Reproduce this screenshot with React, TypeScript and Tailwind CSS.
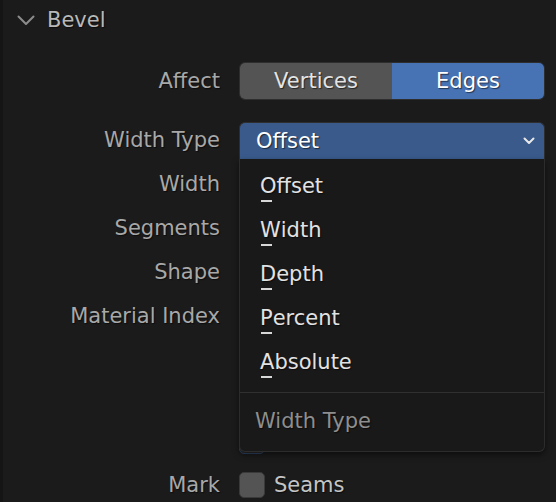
import React from "react";

const shadow = "[text-shadow:1px_1px_1px_rgba(0,0,0,0.55)]";

function Mnemonic({ text }: { text: string }) {
  return (
    <span className="text-[#e2e2e2] [text-shadow:1px_1px_1px_rgba(0,0,0,0.55)]">
      <span className="relative inline-block leading-none">
        {text[0]}
        <span className="absolute left-[1px] bottom-[-5px] w-[11px] h-[2px] bg-[#d8d8d8]" />
      </span>
      {text.slice(1)}
    </span>
  );
}

function Label({ children }: { children?: React.ReactNode }) {
  return (
    <div className="w-[217px] shrink-0 text-right text-[#a8a8a8] [text-shadow:1px_1px_1px_rgba(0,0,0,0.55)]">
      {children}
    </div>
  );
}

export default function App() {
  const items = ["Offset", "Width", "Depth", "Percent", "Absolute"];
  return (
    <div className="flex w-[556px] h-[502px] overflow-hidden bg-[#1b1b1b] font-['DejaVu_Sans',sans-serif] text-[21px] leading-none">
      <div className="w-[3px] shrink-0 bg-[#151515]" />
      <div className="flex-1 flex flex-col">
        {/* Header */}
        <div className="flex items-center h-[40px] pl-[14px] gap-[12px]">
          <svg width="18" height="11" viewBox="0 0 18 11" className="shrink-0">
            <path d="M1.5 1.5 L9 9 L16.5 1.5" fill="none" stroke="#8c8c8c" strokeWidth="2" strokeLinecap="round" strokeLinejoin="round" />
          </svg>
          <span className={`text-[#b8b8b8] ${shadow}`}>Bevel</span>
        </div>

        {/* Affect */}
        <div className="flex items-center gap-[19px] mt-[22px] h-[38px]">
          <Label>Affect</Label>
          <div className="flex w-[306px] h-[38px] rounded-[6px] overflow-hidden border border-[#2e2e2e]">
            <div className={`flex-1 flex items-center justify-center bg-[#545454] text-[#e4e4e4] ${shadow}`}>Vertices</div>
            <div className={`flex-1 flex items-center justify-center bg-[#4772b3] text-white ${shadow}`}>Edges</div>
          </div>
        </div>

        {/* Width Type */}
        <div className="flex items-center gap-[19px] mt-[22px] h-[37px]">
          <Label>Width Type</Label>
          <div className="relative w-[306px] h-[37px]">
            <div className={`flex items-center justify-between h-full pl-[16px] pr-[9px] bg-[#395a8b] rounded-t-[6px] border-t border-x border-[#2e2e2e] text-white ${shadow}`}>
              <span>Offset</span>
              <svg width="12" height="8" viewBox="0 0 12 8">
                <path d="M1.5 1.5 L6 6 L10.5 1.5" fill="none" stroke="#e8e8e8" strokeWidth="2" strokeLinecap="round" strokeLinejoin="round" />
              </svg>
            </div>
            {/* Dropdown menu */}
            <div className="absolute left-0 top-full z-10 w-[306px] h-[293px] flex flex-col bg-[#191919] border-x border-b border-[#2c2c2c] rounded-b-[6px] shadow-[0_3px_6px_rgba(0,0,0,0.5)]">
              <div className="pt-[5px]">
                {items.map((it) => (
                  <div key={it} className="h-[44px] flex items-center pl-[20px]">
                    <Mnemonic text={it} />
                  </div>
                ))}
              </div>
              <div className="mt-[8px] h-px bg-[#303030]" />
              <div className={`h-[56px] flex items-center pl-[15px] text-[#8e8e8e] ${shadow}`}>Width Type</div>
            </div>
          </div>
        </div>

        {/* Hidden rows behind the menu */}
        <div className="flex flex-col mt-[3px]">
          {["Width", "Segments", "Shape", "Material Index"].map((l) => (
            <div key={l} className="flex items-center gap-[19px] h-[44px]">
              <Label>{l}</Label>
            </div>
          ))}
        </div>

        <div className="h-[90px]" />
        <div className="flex items-center gap-[19px] h-[26px]">
          <Label />
          <div className="w-[26px] h-[26px] rounded-[5px] bg-[#2a2a2a] border border-[#2f4668]" />
        </div>

        {/* Mark */}
        <div className="flex items-center gap-[19px] mt-[18px] h-[26px]">
          <Label>Mark</Label>
          <div className="flex items-center gap-[9px]">
            <div className="w-[26px] h-[26px] rounded-[5px] bg-[#545454] border border-[#3a3a3a]" />
            <span className={`text-[#c4c4c4] ${shadow}`}>Seams</span>
          </div>
        </div>
      </div>
    </div>
  );
}
